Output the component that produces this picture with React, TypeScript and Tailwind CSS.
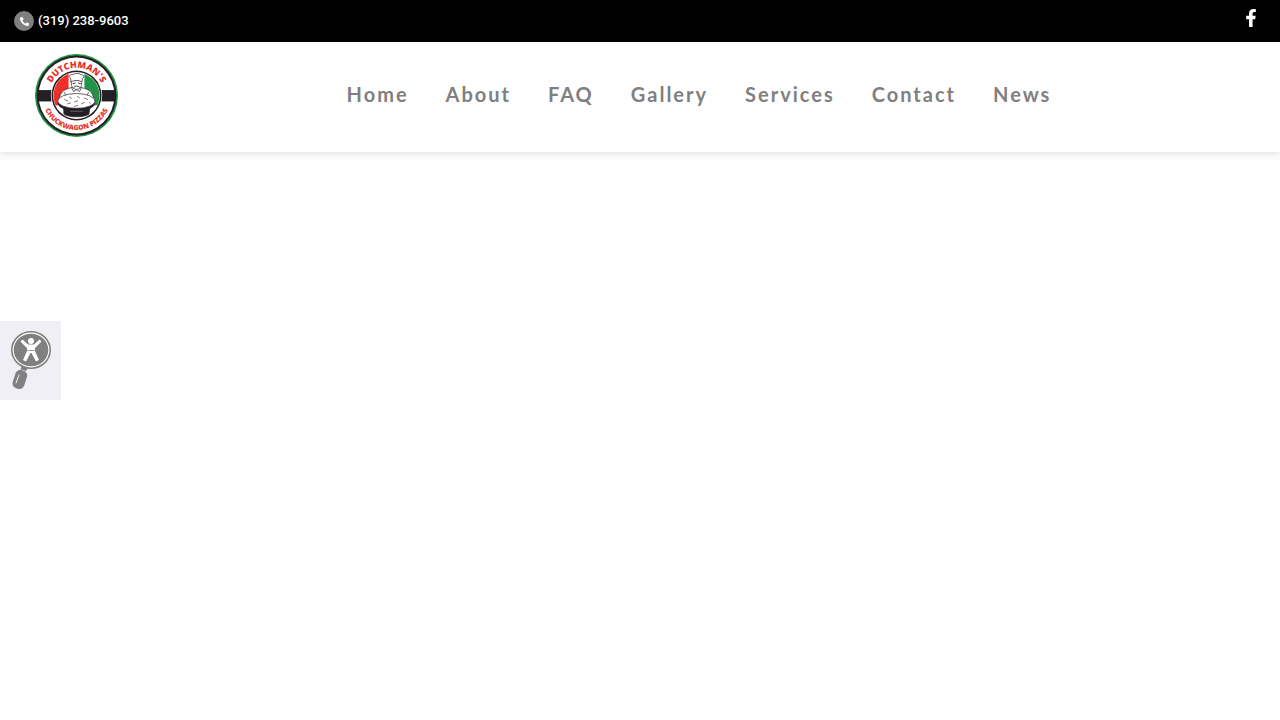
import React from 'react';
import { FaFacebookF, FaPhoneAlt } from 'react-icons/fa';

const navItems = ['Home', 'About', 'FAQ', 'Gallery', 'Services', 'Contact', 'News'];

const Logo: React.FC = () => (
  <svg viewBox="0 0 84 84" className="w-[83px] h-[83px]" role="img" aria-label="Dutchman's Chuckwagon Pizzas">
    <defs>
      <clipPath id="flag">
        <circle cx="42" cy="42" r="23.3" />
      </clipPath>
      <path id="arcTop" d="M14 42 A28 28 0 0 1 70 42" />
      <path id="arcBottom" d="M7 42 A35 35 0 0 0 77 42" />
    </defs>

    {/* Rings and band */}
    <circle cx="42" cy="42" r="42" fill="#239347" />
    <circle cx="42" cy="42" r="40.4" fill="#231f24" />
    <circle cx="42" cy="42" r="38.4" fill="#fff" />
    <rect x="3" y="36.5" width="78" height="11.5" fill="#231f24" />
    <circle cx="42" cy="42" r="26" fill="#fff" />
    <circle cx="42" cy="42" r="25.3" fill="#231f24" />
    <circle cx="42" cy="42" r="23.7" fill="#fff" />

    {/* Flag */}
    <g clipPath="url(#flag)">
      <rect x="18" y="18" width="16" height="34" fill="#ee3029" />
      <rect x="50" y="18" width="16" height="34" fill="#239347" />
    </g>

    {/* Chef */}
    <g stroke="#231f24" strokeWidth="0.7" strokeLinejoin="round" strokeLinecap="round">
      <path d="M24 46 C26 39 28 36 37 34 L47 34 C56 36 58 39 60 46 L60 51 L24 51 Z" fill="#fff" />
      <path d="M37 27 C36 33 38 35 42 36 C46 35 48 33 47 27 Z" fill="#fff" />
      <path d="M36.500 28 L36 24.500 C33 22.500 36 20 38.500 21 C40 19 45 19 46.500 21 C49 20.500 50.500 23 48 25 L47.500 28 C44 26.500 40 26.500 36.500 28 Z" fill="#fff" />
      <path d="M38.500 30 L40.500 29.500 M44 29.500 L46 30 M39.500 33.500 C41 32 43.500 32 45 33.500" fill="none" strokeWidth="0.900" />
      <path d="M37 34 L39 38 L42 36 L45 38 L47 34 M30 39 L31.500 43 M54 39 L52.500 43" fill="none" />
      <path d="M29 52 L56 52 L54.500 61 C49 64.500 35 64.500 29.500 61 Z" fill="#231f24" />
      <ellipse cx="42" cy="50" rx="18.500" ry="7.500" fill="#231f24" />
      <ellipse cx="42" cy="47.500" rx="19" ry="7.500" fill="#fff" />
      <path d="M30 46 L33 47.500 M35 43.500 L37 45 M43 43 L45 44.500 M50 44.500 L53 46 M33 50.500 L36 49.500 M40 48.500 L43 47.500 M47 50.500 L50 49 M40 53 L43 52 M55 49 L56 50" fill="none" stroke="#55504f" strokeWidth="0.800" />
      <path d="M36 58 L48 58" stroke="#8a8788" strokeWidth="0.600" />
    </g>

    <g className="font-['Open_Sans',sans-serif] font-extrabold" fill="#e4342c" textAnchor="middle">
      <text fontSize="9">
        <textPath href="#arcTop" startOffset="50%">DUTCHMAN'S</textPath>
      </text>
      <text fontSize="7">
        <textPath href="#arcBottom" startOffset="50%">CHUCKWAGON PIZZAS</textPath>
      </text>
    </g>
  </svg>
);

const AccessibilityIcon: React.FC = () => (
  <svg viewBox="0 0 40 58" className="w-[40px] h-[58px]" aria-hidden="true">
    <ellipse cx="20" cy="19" rx="19.2" ry="18.2" fill="#fff" stroke="#808080" strokeWidth="1.6" />
    <ellipse cx="20" cy="19" rx="17.3" ry="16.3" fill="#808080" />
    <path d="M11 34.500 L17 37 L15 40 L9.500 38.500 Z" fill="#808080" />
    <rect x="3" y="39" width="12" height="19" rx="5" fill="#808080" transform="rotate(18 9 48)" />
    <path d="M8 44 L5 52" stroke="#f0eff5" strokeWidth="1" strokeLinecap="round" />
    <g fill="#fff">
      <circle cx="20" cy="10" r="3" />
      <path d="M11.500 8.500 L17 13.500 L23 13.500 L28.500 8.500 L30.500 10.500 L24 17 L24 20 L28 29 L25 30.500 L20.500 22 L19.500 22 L15 30.500 L12 29 L16 20 L16 17 L9.500 10.500 Z" />
    </g>
    <path d="M16 19.500 L24 19.500" stroke="#808080" strokeWidth="0.700" />
  </svg>
);

export default function App() {
  return (
    <div className="min-h-screen bg-white">
      {/* Top bar */}
      <div className="flex h-[42px] items-center justify-between bg-black pl-3.5 pr-5 text-white">
        <a href="tel:+13192389603" className="flex items-center gap-1 font-['Roboto',sans-serif] text-[13px] font-medium">
          <span className="flex h-5 w-5 items-center justify-center rounded-full bg-[#808080]">
            <FaPhoneAlt size={9} />
          </span>
          (319) 238-9603
        </a>
        <a href="#facebook" aria-label="Facebook" className="pb-1.5">
          <FaFacebookF size={18} />
        </a>
      </div>

      {/* Header */}
      <header className="flex items-center bg-white pt-3 pb-[15px] pl-[35px] shadow-[0_1px_8px_rgba(0,0,0,0.15)]">
        <a href="#home">
          <Logo />
        </a>
        <nav className="flex flex-1 justify-center gap-[37px] pb-1 font-['Lato',sans-serif] text-[20px] font-bold leading-6 tracking-[2px] text-[#808080]">
          {navItems.map((item) => (
            <a key={item} href={`#${item.toLowerCase()}`}>
              {item}
            </a>
          ))}
        </nav>
      </header>

      {/* Accessibility widget */}
      <button
        type="button"
        aria-label="Accessibility options"
        className="fixed left-0 top-1/2 -mt-[39px] flex h-[79px] w-[61px] items-center justify-center bg-[#f0eff5] pb-0.5"
      >
        <AccessibilityIcon />
      </button>
    </div>
  );
}
